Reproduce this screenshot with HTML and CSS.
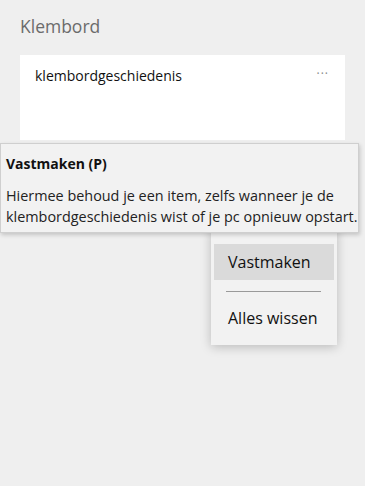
FILE: index.html
```html
<!DOCTYPE html>
<html lang="nl">
<head>
<meta charset="utf-8">
<link rel="stylesheet" href="styles.css">
</head>
<body>
<main class="panel">
  <h1 class="title">Klembord</h1>
  <section class="card">
    <span class="card-text">klembordgeschiedenis</span>
    <span class="more" aria-label="Meer">···</span>
  </section>
</main>
<div class="menu">
  <div class="menu-item active">Vastmaken</div>
  <div class="sep"></div>
  <div class="menu-item">Alles wissen</div>
</div>
<div class="tooltip">
  <div class="tip-title">Vastmaken (P)</div>
  <div class="tip-body">Hiermee behoud je een item, zelfs wanneer je de<br>klembordgeschiedenis wist of je pc opnieuw opstart.</div>
</div>
</body>
</html>
```
FILE: styles.css
```css
html, body { margin: 0; padding: 0; }
body {
  width: 365px;
  height: 486px;
  background: #efefef;
  font-family: "Open Sans", "Noto Sans", sans-serif;
  position: relative;
  overflow: hidden;
}
.panel { padding: 14px 20px 0 20px; }
.title {
  margin: 0;
  font-weight: 400;
  font-size: 17.5px;
  line-height: 24px;
  color: #6b6b6b;
}
.card {
  margin-top: 17px;
  background: #ffffff;
  height: 85px;
  display: flex;
  justify-content: space-between;
  align-items: flex-start;
  padding: 11px 16px 0 15px;
  box-sizing: border-box;
}
.card-text { font-size: 14px; line-height: 20px; color: #111; }
.more { font-size: 12px; color: #888; letter-spacing: 1px; line-height: 16px; }
.tooltip {
  position: absolute;
  left: 0;
  top: 143px;
  width: 359px;
  height: 90px;
  box-sizing: border-box;
  background: #f2f2f2;
  border: 1px solid #cfcfcf;
  box-shadow: 1px 2px 4px rgba(0,0,0,0.18);
  padding: 11px 5px 0 5px;
}
.tip-title { font-weight: 700; font-size: 14px; line-height: 18px; color: #111; }
.tip-body { margin-top: 12px; font-size: 14.4px; line-height: 21px; color: #222; white-space: nowrap; }
.menu {
  position: absolute;
  left: 211px;
  top: 228px;
  width: 126px;
  height: 117px;
  box-sizing: border-box;
  background: #f2f2f2;
  box-shadow: 0 2px 10px rgba(0,0,0,0.22);
  padding: 16px 3px 0 3px;
}
.menu-item {
  height: 36px;
  display: flex;
  align-items: center;
  padding-left: 14px;
  font-size: 16px;
  color: #111;
}
.menu-item.active { background: #dadada; }
.sep { height: 1px; background: #9a9a9a; margin: 11px 13px 8px 12px; }
```
